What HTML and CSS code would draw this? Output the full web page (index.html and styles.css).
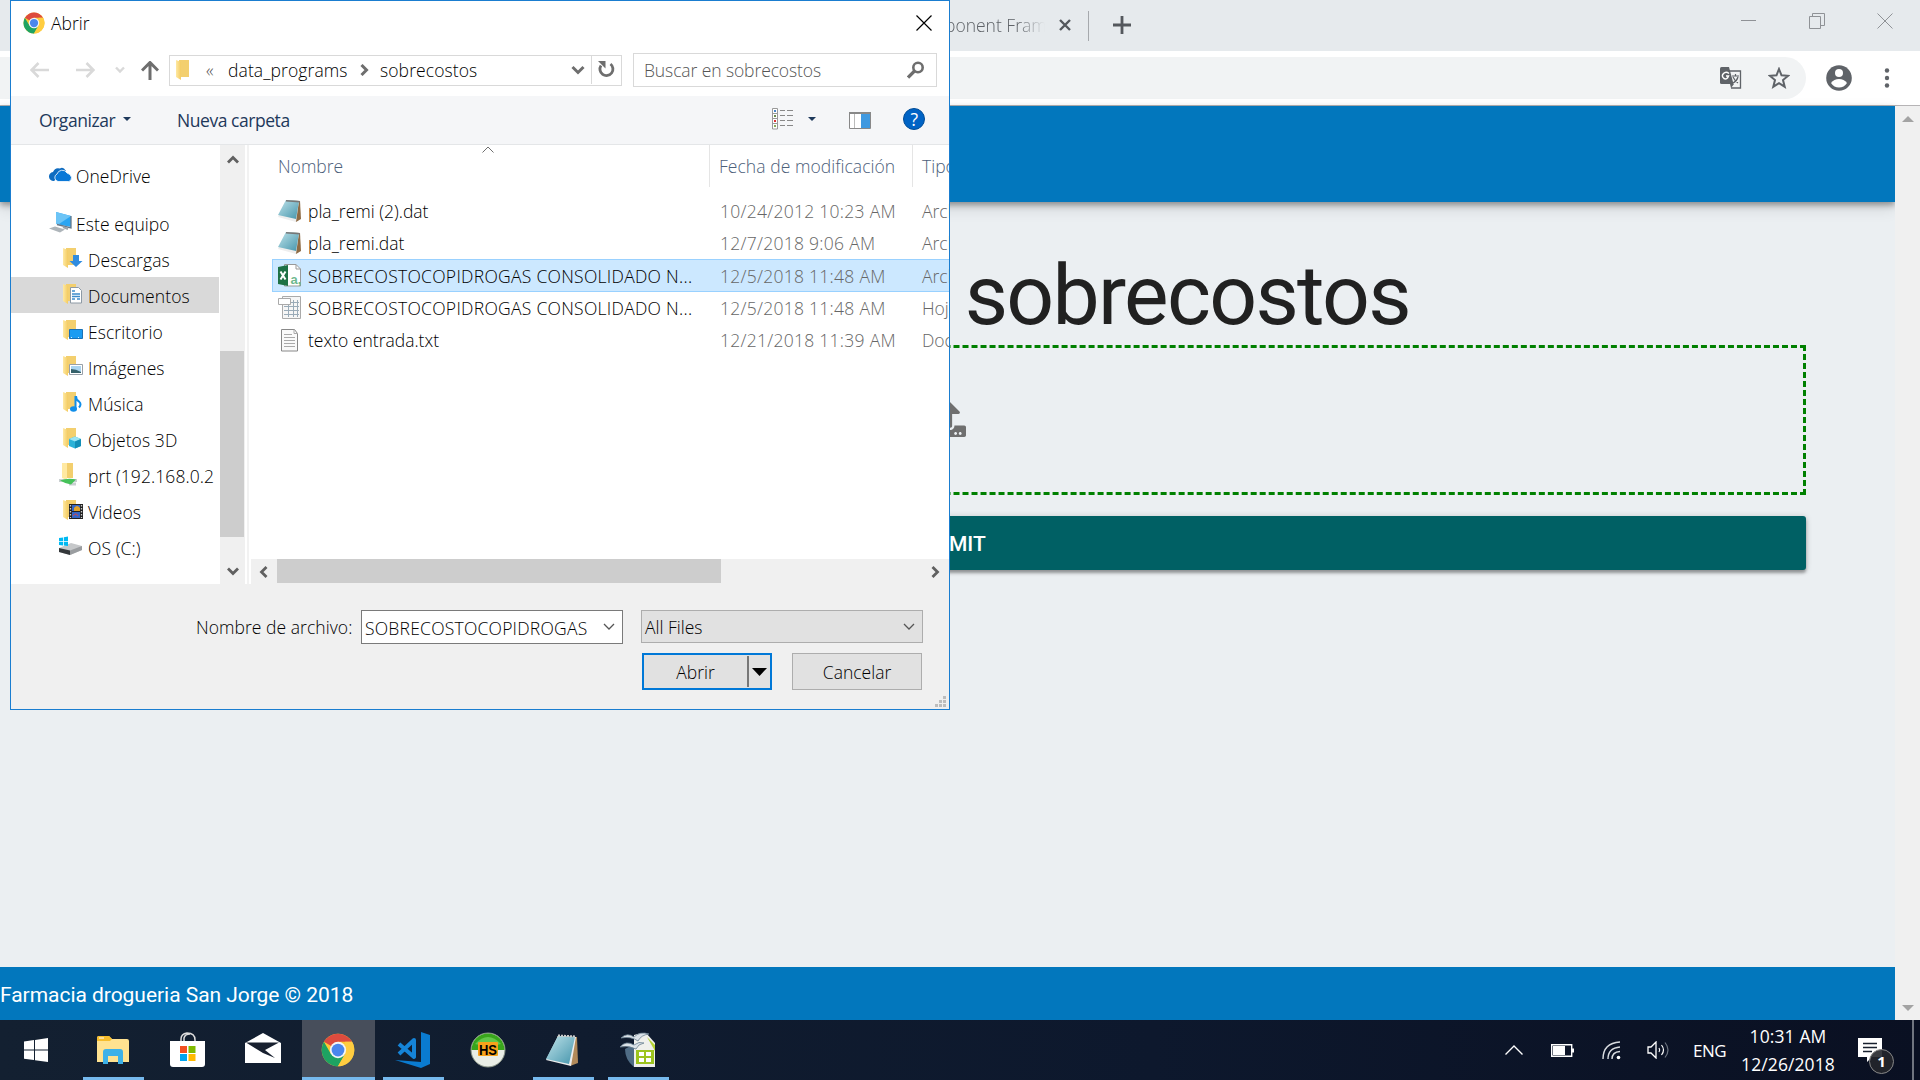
FILE: index.html
```html
<!DOCTYPE html>
<html lang="es">
<head>
<meta charset="utf-8">
<title>sobrecostos</title>
<link rel="stylesheet" href="styles.css">
</head>
<body>
<svg class="defs" width="0" height="0">
  <defs>
    <linearGradient id="gold" x1="0" x2="1"><stop offset="0" stop-color="#ffe9a2"/><stop offset="1" stop-color="#f3cb62"/></linearGradient>
    <linearGradient id="pad" x1="0" y1="0" x2="1" y2="1"><stop offset="0" stop-color="#bfe3ea"/><stop offset="1" stop-color="#4595ac"/></linearGradient>
    <symbol id="folder" viewBox="0 0 22 22"><path d="M4 1h10v17H4z" fill="#f3cf6e"/><path d="M1 1l5 2v18l-5-3z" fill="url(#gold)"/></symbol>
    <symbol id="chrome" viewBox="0 0 48 48">
      <circle cx="24" cy="24" r="23" fill="#fcc934"/>
      <path d="M24 24L4.100 12.500A23 23 0 0 1 43.900 12.500H24z" fill="#dd4b3e"/>
      <path d="M4.100 12.500L14 29.500 24 34 24 47A23 23 0 0 1 4.100 12.500z" fill="#1ea362"/>
      <path d="M24 47L34 29.500 24 34 14 29.500z" fill="#1ea362"/>
      <path d="M24 47L34 29.700V12.500H43.900A23 23 0 0 1 24 47z" fill="#ffcd40"/>
      <circle cx="24" cy="24" r="11.500" fill="#f5f5f5"/><circle cx="24" cy="24" r="9" fill="#4a86ec"/>
    </symbol>
    <symbol id="notepad" viewBox="0 0 24 23"><path d="M8 0l14 1 1 18-5 3z" fill="#8d6b45"/><path d="M8 0l13 1-3 21-18-5z" fill="#eee"/><path d="M8 0l13 1-3 18-18-4z" fill="url(#pad)"/><path d="M8 .8l14 1" stroke="#777" stroke-width="1.500"/></symbol>
    <symbol id="down" viewBox="0 0 14 10"><path d="M1.500 2L7 7.500 12.500 2" fill="none" stroke="currentColor" stroke-width="3"/></symbol>
  </defs>
</svg>

<div class="desktop">
  <header class="tabs">
    <span class="tab-title">ponent Fram</span>
    <svg class="tab-close" width="12" height="12"><path d="M1 1l10 10m0-10L1 11" stroke="#54585d" stroke-width="2.400"/></svg>
    <i class="tab-sep"></i>
    <svg class="plus" width="18" height="18"><path d="M9 0v18M0 9h18" stroke="#54585d" stroke-width="2.800"/></svg>
    <div class="wincontrols">
      <svg width="16" height="16"><path d="M0 7.500h15" stroke="#8f9296"/></svg>
      <svg width="16" height="16"><path d="M.5 3.500h11v12H.5zM3.500 3V.5h12v12H12" fill="none" stroke="#8f9296"/></svg>
      <svg width="16" height="16"><path d="M.5.5l15 15m0-15l-15 15" stroke="#8f9296"/></svg>
    </div>
  </header>
  <div class="toolbar">
    <div class="omnibox">
      <svg width="22" height="22" viewBox="0 0 22 22"><path d="M9 4h11.500v17H11" fill="none" stroke="#5f6368" stroke-width="1.300"/><path d="M1.500 0H9l4.500 17H1.500Q0 17 0 15.500v-14Q0 0 1.500 0z" fill="#5f6368"/><path d="M9 6.500Q6 4 3.500 6.500T4 11.500q3 1.500 4.500-2.500H6" fill="none" stroke="#fff" stroke-width="1.500"/><path d="M12 9h7M15.500 7v2M13 10q2 4 5 6m0-6q-1 4-5 6" fill="none" stroke="#5f6368" stroke-width="1.200"/><path d="M10 17h4l-3 4z" fill="#5f6368"/></svg>
      <svg width="22" height="22" viewBox="0 0 22 22"><path d="M11 2l2.500 6.300 6.700.5-5.200 4.300 1.700 6.600L11 16.100l-5.700 3.600L7 13.100 1.800 8.800l6.700-.5z" fill="none" stroke="#5f6368" stroke-width="2"/></svg>
    </div>
    <svg class="avatar" width="26" height="26" viewBox="0 0 26 26"><circle cx="13" cy="13" r="12.800" fill="#5f6368"/><circle cx="13" cy="8" r="4" fill="#fff"/><path d="M5 18q3-4 8-4t8 4q-3 4.500-8 4.500T5 18z" fill="#fff"/></svg>
    <svg class="dots" width="6" height="20"><g fill="#5f6368"><circle cx="3" cy="2.500" r="2.200"/><circle cx="3" cy="10" r="2.200"/><circle cx="3" cy="17.500" r="2.200"/></g></svg>
  </div>
  <div class="viewport">
    <div class="page">
      <div class="appbar"></div>
      <main>
        <h1>sobrecostos</h1>
        <div class="drop"><svg width="37" height="37" viewBox="0 0 512 512" fill="#6f6f6f"><path d="M296 384h-80c-13.300 0-24-10.700-24-24V192h-87.700c-17.800 0-26.700-21.500-14.100-34.100L242.300 5.700c7.500-7.500 19.800-7.500 27.300 0l152.200 152.200c12.600 12.600 3.700 34.100-14.100 34.100H320v168c0 13.300-10.700 24-24 24zm216-8v112c0 13.300-10.700 24-24 24H24c-13.300 0-24-10.700-24-24V376c0-13.300 10.700-24 24-24h136v8c0 30.900 25.100 56 56 56h80c30.900 0 56-25.100 56-56v-8h136c13.300 0 24 10.700 24 24zm-124 88c0-11-9-20-20-20s-20 9-20 20 9 20 20 20 20-9 20-20zm64 0c0-11-9-20-20-20s-20 9-20 20 9 20 20 20 20-9 20-20z"/></svg></div>
        <button class="submit">SUBMIT</button>
      </main>
      <footer>Farmacia drogueria San Jorge © 2018</footer>
    </div>
    <div class="scroll">
      <svg width="12" height="6"><path d="M0 6l6-6 6 6z" fill="#a3a3a3"/></svg>
      <svg width="12" height="6"><path d="M0 0l6 6 6-6z" fill="#a3a3a3"/></svg>
    </div>
  </div>

  <div class="taskbar">
    <div class="task start"><svg width="24" height="24"><path d="M0 3.500l10-1.400V11.500H0zM11 2l13-2v11.500H11zM0 12.500h10v9.500L0 20.700zM11 12.500h13V24l-13-1.800z" fill="#fff"/></svg></div>
    <div class="task open"><svg width="32" height="28"><path d="M0 2q0-2 2-2h10l3 3h15q2 0 2 2v21H0z" fill="#ffe290"/><path d="M0 2q0-2 2-2h10l3 3-2 2H0z" fill="#f6bd2c"/><path d="M2 2h5" stroke="#fff" stroke-width="1"/><path d="M6 28V16q0-3 3-3h14q3 0 3 3v12h-5v-8H11v8z" fill="#3db1e8"/></svg></div>
    <div class="task"><svg width="36" height="36" viewBox="0 0 36 36"><path d="M11 9V7q0-5 6-6 8 0 8 7v3M14 9V6q1-4 6-4" fill="none" stroke="#ddd" stroke-width="1.500"/><path d="M0 9h35v23q0 3-3 3H3q-3 0-3-3z" fill="#fff"/><path d="M10 14h7v7h-7z" fill="#f25022"/><path d="M18.500 14h7v7h-7z" fill="#7fba00"/><path d="M10 22h7v7h-7z" fill="#00a4ef"/><path d="M18.500 22h7v7h-7z" fill="#ffb900"/></svg></div>
    <div class="task mail"><svg width="36" height="30"><path d="M0 10L18 0l18 10v20H0z" fill="#fff"/><path d="M1 9.500h33L20 17l10 8-12-5z" fill="#18202f"/></svg></div>
    <div class="task open active"><svg width="34" height="34"><use href="#chrome"/></svg></div>
    <div class="task open"><svg width="36" height="36" viewBox="0 0 36 36"><path d="M26 0l9 3v29l-9 4L0 28l26 2z" fill="#0a7bd0"/><path d="M4 12l15 13V8L4 22" fill="none" stroke="#1584d8" stroke-width="4" stroke-linejoin="round"/></svg></div>
    <div class="task"><svg width="36" height="36"><circle cx="18" cy="18" r="17" fill="#e9ede6" stroke="#8a9486"/><path d="M1.500 18a16.500 16.500 0 0 1 33 0z" fill="#39a51c"/><path d="M5 12q13-14 26 0-13 4-26 0z" fill="#63c74a"/><rect x="8" y="10" width="20" height="14" rx="1" fill="#f7a21b"/><text x="9" y="22.500" class="hs" textLength="18" lengthAdjust="spacingAndGlyphs">HS</text></svg></div>
    <div class="task open"><svg width="34" height="33" viewBox="0 0 34 33"><path d="M11 2l20 1 1 26-8 3z" fill="#b28a5a"/><path d="M12 2l18 1-5 29L0 26z" fill="#eee"/><path d="M12 2l17 1-6 27L0 25z" fill="url(#pad)"/><path d="M12 1.500l18 1" stroke="#ccc" stroke-width="2" stroke-dasharray="2 1"/></svg></div>
    <div class="task open"><svg width="36" height="36"><path d="M5 17l9-5v23q-9-7-9-18z" fill="#4f6c85"/><path d="M14 3q8-3 13-1l8 9v24H14z" fill="#f0f0ec"/><path d="M27 5l8 8v6z" fill="#b5d334"/><path d="M1 6q6-6 13-1 6-6 15-3-8 1-11 7-7-5-17-3zM0 15q6-7 14-2 5-4 10-2-6 1-8 6-7-4-16-2z" fill="#dbe2e8" stroke="#6c8192" stroke-width=".8"/><path d="M16 18h18v14H16z" fill="#9dc41e"/><path d="M19 20h5v4h-5zm7 0h5v4h-5zm-7 6h5v4h-5zm7 0h5v4h-5z" fill="#fff"/></svg></div>
    <div class="tray">
      <svg width="18" height="10"><path d="M.5 9.500L9 1l8.500 8.500" fill="none" stroke="#fff" stroke-width="1.400"/></svg>
      <svg width="23" height="13"><path d="M.7.7h20v11.600H.7z" fill="none" stroke="#fff" stroke-width="1.400"/><path d="M2 2h12v9H2z" fill="#fff"/><path d="M22 4.500v4" stroke="#fff" stroke-width="2"/></svg>
      <svg width="20" height="19"><g fill="none" stroke="#d9dce0" stroke-width="1.400"><path d="M1 18Q1 2 18 1"/><path d="M6 18Q6 7 18 6"/><path d="M10 18q0-7 8-7.500"/></g><circle cx="16.500" cy="16.500" r="1.800" fill="#fff"/></svg>
      <svg width="23" height="18"><path d="M1 6h3l5-5v16l-5-5H1z" fill="none" stroke="#fff" stroke-width="1.300"/><path d="M12 7q1.500 2 0 4m2.500-7q4 5 0 10" fill="none" stroke="#fff" stroke-width="1.200"/><path d="M18 1.500q6 7.500 0 15" fill="none" stroke="#6d7480" stroke-width="1.200"/></svg>
      <span class="lang">ENG</span>
      <div class="clock"><span>10:31 AM</span><span>12/26/2018</span></div>
      <div class="notif"><svg width="24" height="24"><path d="M0 0h24v19H14l-5 5v-5H0z" fill="#fff"/><path d="M5 5.500h14M5 9.500h14M5 13.500h9" stroke="#18202f" stroke-width="1.300"/></svg><b>1</b></div>
      <i class="peek"></i>
    </div>
  </div>

  <section class="dialog">
    <div class="title"><svg width="22" height="22"><use href="#chrome"/></svg><span>Abrir</span>
      <svg class="close" width="16" height="16"><path d="M.5.5l15 15m0-15l-15 15" stroke="#000" stroke-width="1.200"/></svg></div>
    <div class="nav">
      <div class="arrows">
        <svg width="19" height="16"><path d="M19 8H2m6.500-7l-7 7 7 7" fill="none" stroke="#d9d9d9" stroke-width="2.600"/></svg>
        <svg width="19" height="16"><path d="M0 8h17m-6.500-7l7 7-7 7" fill="none" stroke="#d9d9d9" stroke-width="2.600"/></svg>
        <svg class="tiny" width="10" height="8"><path d="M1 1.500l4 4 4-4" fill="none" stroke="#d9d9d9" stroke-width="2.400"/></svg>
        <svg width="18" height="19"><path d="M9 19V2M1 9.500L9 1.500l8 8" fill="none" stroke="#6e6e6e" stroke-width="3"/></svg>
      </div>
      <div class="address">
        <svg width="22" height="22"><use href="#folder"/></svg><span class="laquo">«</span><span class="crumb">data_programs</span>
        <svg class="sep" width="9" height="12"><path d="M1.500 1L6.500 6l-5 5" fill="none" stroke="#6e6e6e" stroke-width="3"/></svg><span class="crumb2">sobrecostos</span>
        <svg class="drop-ic" width="14" height="10"><use href="#down"/></svg>
        <span class="refresh"><svg width="17" height="17" viewBox="0 0 17 17"><path d="M12.500 3A6.500 6.500 0 1 1 3 4.500" fill="none" stroke="#6e6e6e" stroke-width="2.800"/><path d="M0 0h7.500v7.500z" fill="#6e6e6e"/></svg></span>
      </div>
      <div class="search"><span>Buscar en sobrecostos</span><svg width="18" height="18"><circle cx="11" cy="6.500" r="4.700" fill="none" stroke="#6e6e6e" stroke-width="2.600"/><path d="M7.500 10L1 16.500" stroke="#6e6e6e" stroke-width="3.200"/></svg></div>
    </div>
    <div class="commands">
      <span class="org">Organizar</span><svg class="caret" width="8" height="4"><path d="M0 0h8L4 4z" fill="#1e395b"/></svg><span class="newf">Nueva carpeta</span>
      <svg class="view" width="22" height="22"><path d="M.5.500h5v20.500h-5zM.5 5.500h5M.5 10.500h5M.5 15.500h5" fill="#fff" stroke="#999"/><path d="M8 2.500h5m2 0h6M8 7.500h5m2 0h6M8 12.500h5m2 0h6M8 17.500h5m2 0h6" stroke="#888"/><path d="M2 2h2v2H2z" fill="#4a86c5"/><path d="M2 7h2v2H2z" fill="#6a8a4a"/><path d="M2 12h2v2H2z" fill="#d33"/><path d="M2 17h2v2H2z" fill="#8a5"/></svg>
      <svg class="caret2" width="8" height="4"><path d="M0 0h8L4 4z" fill="#1e395b"/></svg>
      <svg class="pane" width="22" height="17"><path d="M.5.500h21v16H.5z" fill="#fff" stroke="#888"/><path d="M0 1h22" stroke="#888" stroke-width="2"/><path d="M5.500 2v14" stroke="#bbb"/><path d="M12 2h9v14h-9z" fill="#4099e0"/></svg>
      <span class="help">?</span>
    </div>
    <div class="body">
      <div class="tree">
        <div class="node top one"><svg width="23" height="15"><path d="M5 14a4.500 4.500 0 0 1-1-9Q6 0 11 1.500 14-1 17 4z" fill="#0f6cc0"/><path d="M9 14.500a4 4 0 0 1-1-7.500 5.500 5.500 0 0 1 10-1q4 1 4.500 4.500 0 4-3 4z" fill="#0a78d7" stroke="#fff" stroke-width=".8"/></svg><span>OneDrive</span></div>
        <div class="node top pc"><svg width="23" height="22"><path d="M7 1l15 4v11L7 13z" fill="#2aa5f2"/><path d="M7 1l15 4-12 8-3 0z" fill="#6cc4f6"/><path d="M22 5v12l-14-3.500" fill="none" stroke="#678" stroke-width="1.300"/><path d="M0 17.500l6-2 10 3-5 3z" fill="#aeb5ba"/><path d="M14 16l5 2" stroke="#9aa2a8" stroke-width="2"/></svg><span>Este equipo</span></div>
        <div class="node"><svg width="22" height="22"><use href="#folder"/><path d="M11 8h6v6h3.500L14 20 7.500 14H11z" fill="#2f8ce0"/></svg><span>Descargas</span></div>
        <div class="node sel"><svg width="22" height="22"><use href="#folder"/><path d="M8.500 4.500h8l3 3v12.500h-11z" fill="#fff" stroke="#8e9aa5"/><path d="M10 8h3m-3 3h8m-8 2.500h8M10 16h3m2 0h3" stroke="#3c8ccb" stroke-width="1.400"/></svg><span>Documentos</span></div>
        <div class="node"><svg width="22" height="22"><use href="#folder"/><path d="M7.500 10.500h13v9h-13z" fill="#1b9cf2" stroke="#1b71b5"/><path d="M9 18.500h10" stroke="#cfe9fb" stroke-dasharray="1 6"/></svg><span>Escritorio</span></div>
        <div class="node"><svg width="22" height="22"><use href="#folder"/><path d="M7.500 9.500h13v10h-13z" fill="#fff" stroke="#98a0a8"/><path d="M9 11h10v7H9z" fill="#a9d4f1"/><path d="M9 14q5 0 10 3v1H9z" fill="#35616a"/></svg><span>Imágenes</span></div>
        <div class="node"><svg width="22" height="22"><use href="#folder"/><path d="M13.500 5v13M14 5q0 4 3 5.500 3 2.500 0 6" fill="none" stroke="#108ee9" stroke-width="2"/><ellipse cx="11.500" cy="18" rx="3.500" ry="2.800" fill="#108ee9"/></svg><span>Música</span></div>
        <div class="node"><svg width="22" height="22"><use href="#folder"/><path d="M7 12l6-2.500 6 2.500v7l-6 2.500L7 19z" fill="#2bb2d8"/><path d="M7 12l6-2.500 6 2.500-6 2.500z" fill="#9be4f4"/><path d="M13 14.500l6-2.500v7l-6 2.500z" fill="#138fb8"/></svg><span>Objetos 3D</span></div>
        <div class="node net"><svg width="22" height="24"><path d="M3 1h11v15H3z" fill="#f3cf6e"/><path d="M3 1h5v17l-5-2z" fill="#ffe9a2"/><path d="M0 18.500h18M10 22h7" stroke="#c9cfd1" stroke-width="3"/><path d="M1 18.500q8-3 16-1l-5 5q-6-1-11-4z" fill="#46c25a"/></svg><span>prt (192.168.0.2</span></div>
        <div class="node"><svg width="22" height="22"><use href="#folder"/><path d="M7 5h14v15H7z" fill="#222"/><path d="M10 6h8v6h-8zm0 7h8v6h-8z" fill="#3566c6"/><path d="M12 9q3-4 6 0v3h-6z" fill="#e0a22a"/><path d="M11 17q3-4 5 0" stroke="#d44" fill="none"/><path d="M8.500 6v13m11-13v13" stroke="#ccc" stroke-width="1.300" stroke-dasharray="1.500 1.500"/></svg><span>Videos</span></div>
        <div class="node net disk"><svg width="24" height="20"><path d="M0 12l12-5 11 3v4l-12 5L0 16z" fill="#c6c8ca"/><path d="M0 12l11 2.500V19L0 16z" fill="#34383b"/><path d="M11 14.500L23 10v4l-12 5z" fill="#9a9da0"/><path d="M0 2l4-.6V5H0zM4.800 1.300L9 .6V5H4.800zM0 5.800h4v3.600L0 9zm4.800 0H9v4.300l-4.200-.6z" fill="#00b9f2"/></svg><span>OS (C:)</span></div>
      </div>
      <div class="vbar"><svg width="12" height="10"><path d="M1 8.500l5-5 5 5" fill="none" stroke="#606060" stroke-width="2.800"/></svg><i></i><svg width="12" height="10"><path d="M1 1.500l5 5 5-5" fill="none" stroke="#606060" stroke-width="2.800"/></svg></div>
      <div class="files">
        <svg class="sort" width="12" height="7"><path d="M.5 6.500L6 1l5.500 5.500" fill="none" stroke="#6e6e6e"/></svg>
        <div class="row head"><span class="name">Nombre</span><span class="date">Fecha de modificación</span><span class="type">Tipo</span></div>
        <div class="row"><svg width="24" height="23"><use href="#notepad"/></svg><span class="name">pla_remi (2).dat</span><span class="date">10/24/2012 10:23 AM</span><span class="type">Archivo</span></div>
        <div class="row"><svg width="24" height="23"><use href="#notepad"/></svg><span class="name">pla_remi.dat</span><span class="date">12/7/2018 9:06 AM</span><span class="type">Archivo</span></div>
        <div class="row picked"><svg width="24" height="23"><path d="M6.500.5H18l4.500 4.500v17h-16z" fill="#fff" stroke="#999"/><path d="M18 .5V5h4.500" fill="none" stroke="#999"/><path d="M0 3l10-2v21L0 20z" fill="#1e7145"/><path d="M2.500 7.500l5 8m0-8l-5 8" stroke="#fff" stroke-width="2"/><text x="12.500" y="20" class="csv">a,</text></svg><span class="name caps">SOBRECOSTOCOPIDROGAS CONSOLIDADO N...</span><span class="date">12/5/2018 11:48 AM</span><span class="type">Archivo</span></div>
        <div class="row"><svg width="24" height="24"><path d="M4.500.5h18v22h-18z" fill="#f6f6f6" stroke="#aaa"/><path d="M6 6.500h15M6 10.500h15M6 14.500h15M6 18.500h15M10.500 4v17M15.500 4v17M19.500 4v17" stroke="#9aabb8"/><path d="M.5 2.500h12v6H.5z" fill="#fff" stroke="#aaa"/></svg><span class="name caps">SOBRECOSTOCOPIDROGAS CONSOLIDADO N...</span><span class="date">12/5/2018 11:48 AM</span><span class="type">Hoja</span></div>
        <div class="row"><svg width="24" height="23"><path d="M3.500.5h13l3 4v17.500h-16z" fill="#fafafa" stroke="#888"/><path d="M16 .5v4h4M6 5.500h8M6 8.500h11M6 11.500h11M6 14.500h11M6 17.500h11" fill="none" stroke="#aaa"/></svg><span class="name">texto entrada.txt</span><span class="date">12/21/2018 11:39 AM</span><span class="type">Documento</span></div>
        <div class="hbar"><svg width="10" height="12"><path d="M8.500 1l-5 5 5 5" fill="none" stroke="#606060" stroke-width="2.800"/></svg><i></i><svg width="10" height="12"><path d="M1.500 1l5 5-5 5" fill="none" stroke="#606060" stroke-width="2.800"/></svg></div>
      </div>
    </div>
    <div class="bottom">
      <div class="line"><span class="label">Nombre de archivo:</span>
        <div class="combo"><span class="caps">SOBRECOSTOCOPIDROGAS</span><svg width="12" height="8"><path d="M1 1l5 5 5-5" fill="none" stroke="#555" stroke-width="1.300"/></svg></div>
        <div class="combo filter"><span>All Files</span><svg width="12" height="8"><path d="M1 1l5 5 5-5" fill="none" stroke="#555" stroke-width="1.300"/></svg></div></div>
      <div class="line actions"><div class="btn primary"><span>Abrir</span><i><svg width="15" height="8"><path d="M0 0h15L7.500 8z"/></svg></i></div><div class="btn">Cancelar</div></div>
      <svg class="grip" width="11" height="11"><path d="M8 0h3v3H8zM4 4h3v3H4zM8 4h3v3H8zM0 8h3v3H0zM4 8h3v3H4zM8 8h3v3H8z" fill="#bdbdbd"/></svg>
    </div>
  </section>
</div>
</body>
</html>
```
FILE: styles.css
```css
* { box-sizing: border-box; }
body { margin: 0; overflow: hidden; font-family: "Open Sans", "Noto Sans", sans-serif; font-size: 17.5px; font-weight: 300; white-space: nowrap; }
svg { display: block; flex: none; }
i { font-style: normal; }
.defs { position: absolute; }
.desktop { position: relative; width: 1920px; height: 1080px; display: flex; flex-direction: column; background: #ebeff2; }

/* browser chrome */
.tabs { height: 51px; background: #e6eaed; display: flex; align-items: flex-start; padding-left: 945px; }
.tab-title { width: 100px; margin-top: 13px; overflow: hidden; color: #5f6368; -webkit-mask-image: linear-gradient(90deg, #000 72px, transparent 100px); mask-image: linear-gradient(90deg, #000 72px, transparent 100px); }
.tab-close { margin: 19px 0 0 14px; }
.tab-sep { width: 1px; height: 30px; margin: 11px 0 0 17px; background: #a6a9ad; }
.plus { margin: 16px 0 0 24px; }
.wincontrols { display: flex; gap: 52px; margin: 13px 27px 0 auto; }
.toolbar { height: 55px; background: #fff; border-bottom: 1px solid #b6b4b6; display: flex; align-items: center; padding-right: 30px; }
.omnibox { width: 1806px; height: 42px; border-radius: 0 21px 21px 0; background: #f1f3f4; display: flex; justify-content: flex-end; align-items: center; gap: 26px; padding-right: 16px; }
.avatar { margin-left: 20px; }
.dots { margin-left: auto; }

/* web page */
.viewport { height: 914px; display: flex; }
.page { width: 1895px; display: flex; flex-direction: column; background: #ebeff2; }
.appbar { height: 96px; background: #0277bd; box-shadow: 0 3px 6px rgba(0,0,0,.35), 0 6px 15px rgba(0,0,0,.12); }
main { flex: 1; padding: 43px 89px 0; display: flex; flex-direction: column; }
h1 { margin: 0; width: 1321px; height: 100px; text-align: right; font: 400 84px/102px Roboto, sans-serif; letter-spacing: -.02em; color: #212121; }
.drop { height: 150px; border: 3px dashed #008000; display: flex; justify-content: center; align-items: center; padding-bottom: 3px; }
.submit { margin-top: 21px; height: 54px; padding-top: 3px; border: 0; border-radius: 3px; background: #006064; color: #fff; font: 500 21px Roboto, sans-serif; box-shadow: 0 3px 3px rgba(0,0,0,.3), 0 1px 6px rgba(0,0,0,.2); }
footer { height: 53px; background: #0277bd; color: #fff; font: 400 21px/57px Roboto, sans-serif; letter-spacing: -.04px; }
.scroll { width: 25px; background: #f0f0f0; display: flex; flex-direction: column; justify-content: space-between; align-items: center; padding: 10px 0 9px; }

/* taskbar */
.taskbar { height: 60px; display: flex; background: linear-gradient(90deg, #132031, #0d182d 60%, #0a1022); color: #fff; font-weight: 400; }
.task { width: 61px; margin: 0 7px; padding-right: 2px; display: flex; align-items: center; justify-content: center; border-bottom: 3px solid transparent; border-top: 3px solid transparent; }
.start { width: 62px; padding-right: 4px; }
.mail { padding-bottom: 4px; }
.open { border-bottom-color: #76b9ed; }
.active { width: 73px; margin: 0 1px; background: #474e5b; border-top-color: #474e5b; }
.hs { font: 700 14px "Liberation Sans", sans-serif; }
.tray { margin-left: auto; display: flex; align-items: center; }
.tray > svg { margin-right: 28px; }
.tray > svg:nth-child(3) { margin-right: 25px; }
.tray > svg:nth-child(4) { margin-right: 23px; }
.lang { width: 33px; letter-spacing: -.5px; font-size: 17px; margin-right: 12px; }
.clock { width: 100px; display: flex; flex-direction: column; align-items: center; line-height: 28px; letter-spacing: .1px; font-size: 17.500px; }
.notif { position: relative; margin: 0 30px 0 20px; }
.notif b { position: absolute; left: 11px; top: 11px; width: 25px; height: 25px; border-radius: 50%; border: 1px solid #888; background: rgba(35,38,43,.9); text-align: center; font-size: 15px; line-height: 23px; }
.peek { width: 2px; height: 60px; margin-right: 6px; background: #70757f; }

/* file dialog window */
.dialog { position: absolute; left: 10px; top: 0; width: 940px; height: 710px; border: 1px solid #1a7dd0; background: #fff; display: flex; flex-direction: column; color: #000; overflow: hidden; }
.title { height: 43px; display: flex; align-items: center; padding: 0 17px 0 12px; }
.title span { margin: 0 0 0 6px; }
.close { margin-left: auto; }
.nav { height: 52px; display: flex; align-items: center; color: #000; }
.arrows { width: 158px; padding-left: 19px; display: flex; align-items: center; }
.arrows svg:nth-child(2) { margin-left: 27px; }
.arrows .tiny { margin: 0 16px 0 20px; }
.address { width: 453px; height: 31px; border: 1px solid #d9d9d9; display: flex; align-items: center; padding: 0 0 1px 5px; }
.laquo { width: 22px; margin-left: 9px; color: #555; }
.crumb { width: 120px; letter-spacing: .1px; }
.sep { margin: 0 11px 0 12px; }
.crumb2 { letter-spacing: .1px; }
.drop-ic { margin: 0 6px 0 auto; color: #6e6e6e; }
.refresh { width: 30px; height: 29px; border-left: 1px solid #d9d9d9; display: grid; place-items: center; }
.search { width: 304px; height: 34px; margin-left: 11px; border: 1px solid #d9d9d9; display: flex; align-items: center; justify-content: space-between; padding: 0 11px 0 10px; color: #555; }
.search span { letter-spacing: -.1px; }
.commands { height: 49px; background: #f5f6f8; border-bottom: 1px solid #e4e6e8; display: flex; align-items: center; color: #1e395b; font-weight: 400; letter-spacing: -.45px; }
.org { width: 77px; margin-left: 28px; }
.caret { margin: 0 46px 3px 7px; }
.newf { width: 112px; }
.view { margin-left: 483px; margin-bottom: 2px; }
.caret2 { margin: 0 33px 2px 14px; }
.help { width: 22px; height: 22px; margin: 0 0 2px 32px; border-radius: 50%; background: #0063c5; border: 1px solid #004c97; color: #fff; text-align: center; line-height: 20px; }
.body { height: 439px; display: flex; }
.tree { width: 209px; padding-top: 12px; overflow: hidden; }
.node { width: 208px; height: 36px; display: flex; align-items: center; padding-left: 51px; }
.node svg { margin-bottom: 2px; }
.node span { margin: 1px 0 0 4px; letter-spacing: .08px; }
.top { padding-left: 38px; }
.one { margin-bottom: 12px; }
.top span { margin-left: 4px; }
.sel { background: #d9d9d9; }
.net { padding-left: 48px; }
.net svg + span { margin-left: 7px; }
.disk svg + span { margin-left: 5px; }
.vbar { width: 25px; background: #f0f0f0; display: flex; flex-direction: column; align-items: center; padding: 9px 0 7px; }
.vbar i { width: 24px; height: 186px; margin: 187px 1px 30px 0; background: #cdcdcd; }
.files { position: relative; width: 704px; border-left: 2px solid #fff; display: flex; flex-direction: column; }
.files::before { content: ""; position: absolute; left: 0; top: 0; bottom: 0; width: 2px; background: #f2f2f2; }
.sort { position: absolute; left: 235px; top: 1px; }
.row { height: 32px; margin-left: 25px; padding-left: 6px; display: flex; align-items: center; overflow: hidden; }
.row > * { flex: none; }
.row svg { margin-right: 6px; }
.name { width: 412px; }
.date { width: 202px; color: #666; letter-spacing: .27px; }
.type { color: #666; }
.head { height: 42px; margin-bottom: 8px; align-items: stretch; line-height: 43px; }
.head span { color: #4c607a; }
.head .name { width: 431px; }
.head .date { width: 203px; padding-left: 9px; border-left: 1px solid #e5e5e5; letter-spacing: .05px; }
.head .type { padding-left: 9px; border-left: 1px solid #e5e5e5; }
.picked { height: 33px; background: #cce8ff; border: 1px solid #99d1ff; border-right: 0; padding-left: 5px; }
.caps { letter-spacing: .28px; }
.hbar { height: 25px; margin: auto 0 0 4px; background: #f0f0f0; display: flex; align-items: center; padding: 0 8px 0 7px; }
.hbar i { width: 444px; height: 24px; margin: 0 auto 1px 9px; background: #cdcdcd; }
.bottom { position: relative; flex: 1; background: #f0f0f0; padding-top: 26px; }
.line { display: flex; align-items: center; }
.label { width: 165px; margin-left: 185px; letter-spacing: .05px; }
.combo { width: 262px; height: 34px; border: 1px solid #7a7a7a; background: #fff; display: flex; align-items: center; justify-content: space-between; padding: 0 7px 0 3px; }
.combo .caps { letter-spacing: .22px; padding-top: 2px; }
.filter { width: 282px; height: 33px; margin: 0 0 1px 18px; background: #e1e1e1; border-color: #adadad; }
.actions { margin-top: 9px; padding-left: 631px; gap: 20px; }
.btn { width: 130px; height: 37px; border: 1px solid #adadad; background: #e1e1e1; display: flex; justify-content: center; align-items: center; }
.primary { border: 2px solid #0078d7; }
.primary span { flex: 1; text-align: center; }
.primary i { width: 23px; height: 31px; border-left: 2px solid #777; display: grid; place-items: center; }
.grip { position: absolute; right: 3px; bottom: 2px; }
.csv { font: 700 13px "Liberation Sans", sans-serif; fill: #6fb98f; }
```
